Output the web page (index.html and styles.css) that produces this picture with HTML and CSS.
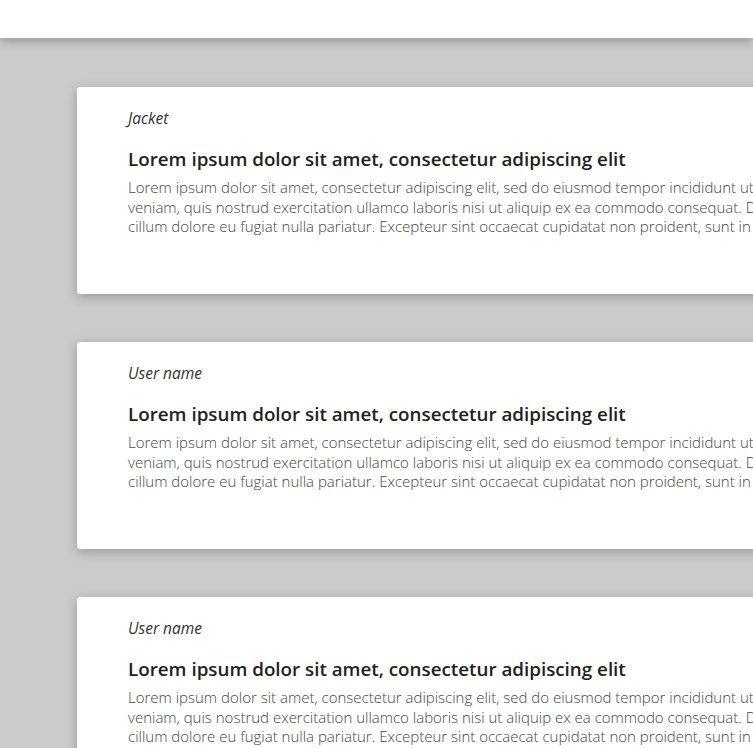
FILE: index.html
```html
<!DOCTYPE html>
<html lang="en">
<head>
<meta charset="utf-8">
<title>Cards</title>
<link rel="stylesheet" href="styles.css">
</head>
<body>
<header class="topbar"></header>
<main class="list">
  <article class="card">
    <p class="author">Jacket</p>
    <h2 class="title">Lorem ipsum dolor sit amet, consectetur adipiscing elit</h2>
    <p class="text"><span class="line">Lorem ipsum dolor sit amet, consectetur adipiscing elit, sed do eiusmod tempor incididunt ut labore et dolore magna aliqua. Ut enim ad minim</span><span class="line">veniam, quis nostrud exercitation ullamco laboris nisi ut aliquip ex ea commodo consequat. Duis aute irure dolor in reprehenderit in voluptate velit esse</span><span class="line">cillum dolore eu fugiat nulla pariatur. Excepteur sint occaecat cupidatat non proident, sunt in culpa qui officia deserunt mollit anim id est laborum.</span></p>
  </article>
  <article class="card">
    <p class="author">User name</p>
    <h2 class="title">Lorem ipsum dolor sit amet, consectetur adipiscing elit</h2>
    <p class="text"><span class="line">Lorem ipsum dolor sit amet, consectetur adipiscing elit, sed do eiusmod tempor incididunt ut labore et dolore magna aliqua. Ut enim ad minim</span><span class="line">veniam, quis nostrud exercitation ullamco laboris nisi ut aliquip ex ea commodo consequat. Duis aute irure dolor in reprehenderit in voluptate velit esse</span><span class="line">cillum dolore eu fugiat nulla pariatur. Excepteur sint occaecat cupidatat non proident, sunt in culpa qui officia deserunt mollit anim id est laborum.</span></p>
  </article>
  <article class="card">
    <p class="author">User name</p>
    <h2 class="title">Lorem ipsum dolor sit amet, consectetur adipiscing elit</h2>
    <p class="text"><span class="line">Lorem ipsum dolor sit amet, consectetur adipiscing elit, sed do eiusmod tempor incididunt ut labore et dolore magna aliqua. Ut enim ad minim</span><span class="line">veniam, quis nostrud exercitation ullamco laboris nisi ut aliquip ex ea commodo consequat. Duis aute irure dolor in reprehenderit in voluptate velit esse</span><span class="line">cillum dolore eu fugiat nulla pariatur. Excepteur sint occaecat cupidatat non proident, sunt in culpa qui officia deserunt mollit anim id est laborum.</span></p>
  </article>
</main>
</body>
</html>
```
FILE: styles.css
```css
html, body {
  margin: 0;
  padding: 0;
  overflow: hidden;
}
body {
  background: #cbcbcb;
  font-family: "Open Sans", "Noto Sans", sans-serif;
  color: #222;
}
.topbar {
  height: 38px;
  background: #fff;
  box-shadow: 0 3px 10px rgba(0, 0, 0, 0.28);
  position: relative;
  z-index: 1;
}
.list {
  display: flex;
  flex-direction: column;
  gap: 48px;
  padding: 49px 0 0 77px;
}
.card {
  width: 1000px;
  height: 207px;
  box-sizing: border-box;
  background: #fff;
  border-radius: 3px;
  box-shadow: 0 3px 12px rgba(0, 0, 0, 0.25);
  padding: 21px 0 0 51px;
  flex: none;
}
.author {
  margin: 0;
  font-style: italic;
  font-size: 15.5px;
  line-height: 20px;
  color: #333;
}
.title {
  margin: 18px 0 0;
  font-size: 18.8px;
  font-weight: 600;
  line-height: 26px;
  color: #222;
}
.text {
  margin: 6px 0 0;
  font-size: 15px;
  font-weight: 300;
  line-height: 19.5px;
  color: #444;
}
.line {
  display: block;
  white-space: nowrap;
}
```
